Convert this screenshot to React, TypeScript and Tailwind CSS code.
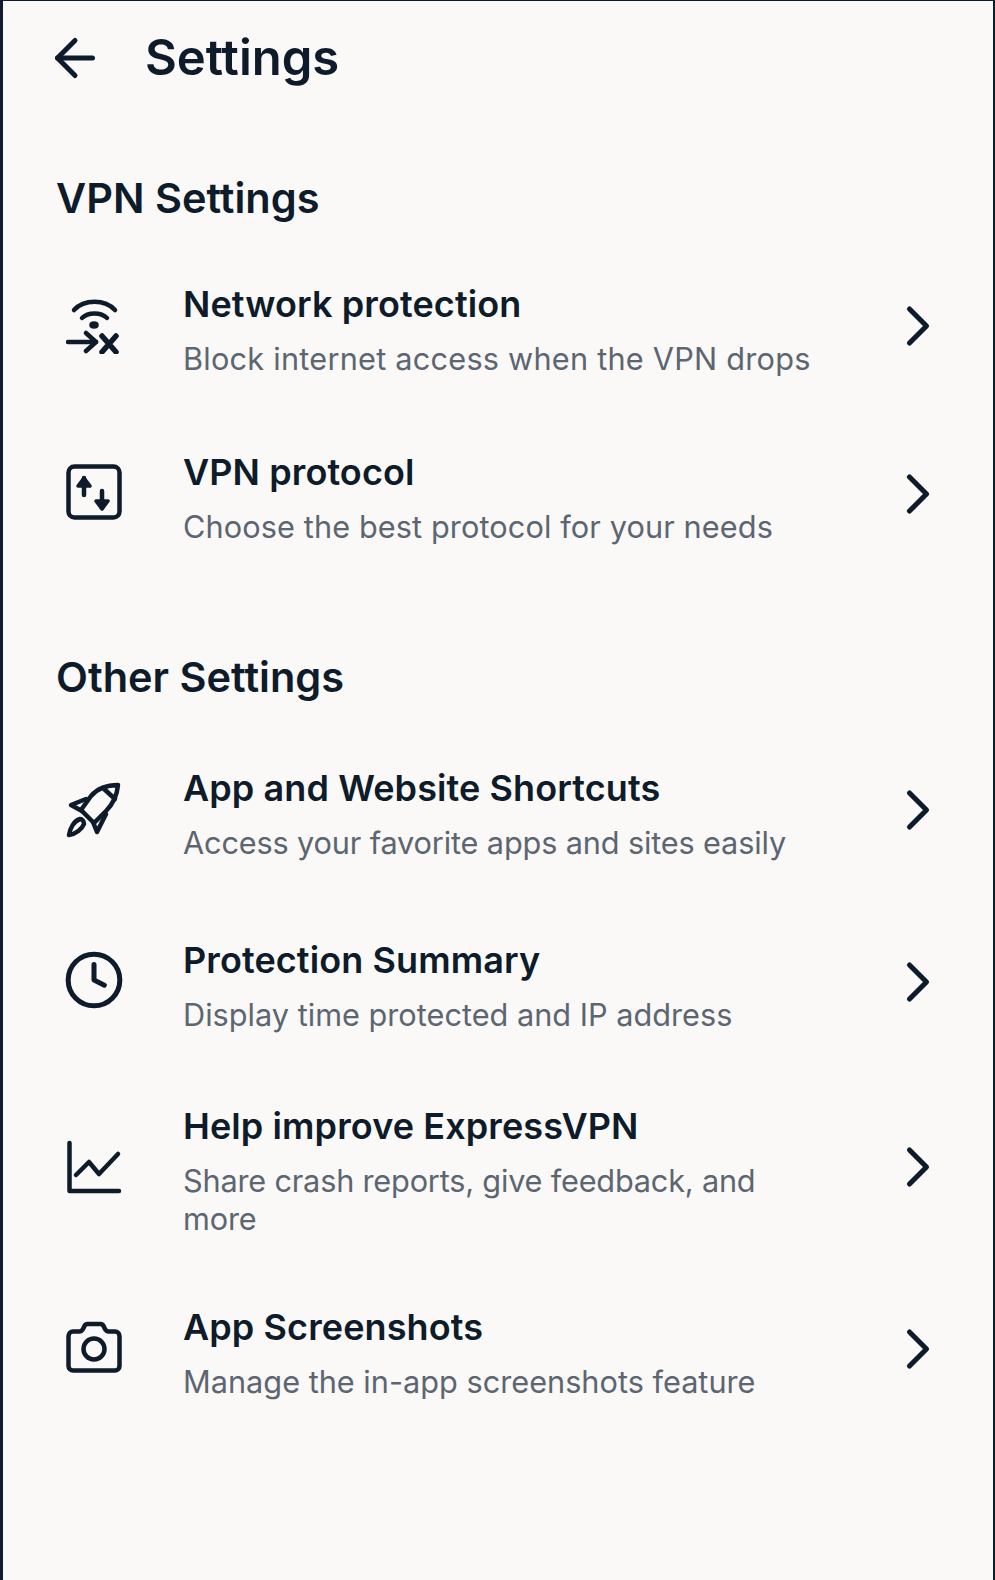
import { ArrowLeft, ChevronRight, Clock } from 'lucide-react';
import type { ReactNode } from 'react';

interface SettingRow {
  title: string;
  subtitle: string;
  icon: ReactNode;
  className: string;
  iconClassName: string;
  subtitleClassName: string;
}

function NetworkIcon() {
  return (
    <svg viewBox="0 0 56 56" className="w-14 h-14" fill="none" stroke="currentColor" strokeWidth="4.5" strokeLinecap="round" strokeLinejoin="round">
      <path d="M8 12C18 1 39 1 49 12" />
      <path d="M16 20C22 14 35 14 41 20" />
      <ellipse cx="28" cy="27" rx="2.500" ry="1.500" fill="currentColor" />
      <path d="M2 44H30" />
      <path d="M20 35L30 44L20 53" />
      <path d="M36 38L50 54M50 38L36 54" strokeWidth="5.5" />
    </svg>
  );
}

function ProtocolIcon() {
  return (
    <svg viewBox="0 0 56 56" className="w-14 h-14" fill="none" stroke="currentColor" strokeWidth="4.5" strokeLinecap="round" strokeLinejoin="round">
      <rect x="2.500" y="2.500" width="51" height="51" rx="6" />
      <path d="M18 31V14" />
      <path d="M12 22L18 14L24 22Z" fill="currentColor" strokeWidth="3.500" />
      <path d="M36 27V44" />
      <path d="M30 37L36 45L42 37Z" fill="currentColor" strokeWidth="3.500" />
    </svg>
  );
}

function RocketIcon() {
  return (
    <svg viewBox="0 0 56 56" className="w-14 h-14" fill="none" stroke="currentColor" strokeWidth="4.5" strokeLinecap="round" strokeLinejoin="round">
      <path d="M52 3C51 14 47 22 40 29L28 41L15 28L25 14C31 7 41 3 52 3Z" />
      <path d="M37 6L49 17" />
      <path d="M20 17L5 23L16 29" />
      <path d="M40 32L31 50L27 40" />
      <path d="M14 37C8 39 4 46 3 53C10 52 16 47 18 42C18 39 16 37 14 37Z" />
    </svg>
  );
}

function ChartIcon() {
  return (
    <svg viewBox="0 0 56 56" className="w-14 h-14" fill="none" stroke="currentColor" strokeWidth="4.5" strokeLinecap="round" strokeLinejoin="round">
      <path d="M3.500 4V52H53" />
      <path d="M10 36L23 23L33 35L52 15" />
    </svg>
  );
}

function CameraIcon() {
  return (
    <svg viewBox="0 0 56 56" className="w-14 h-14" fill="none" stroke="currentColor" strokeWidth="4.5" strokeLinecap="round" strokeLinejoin="round">
      <path d="M7 12.500H13.500C15 12.500 16 11.500 17 10L18.500 7C19 5.500 20 5 21.500 5H34.500C36 5 37 5.500 37.500 7L39 10C40 11.500 41 12.500 42.500 12.500H49A4.500 4.500 0 0 1 53.500 17V47A4.500 4.500 0 0 1 49 51.500H7A4.500 4.500 0 0 1 2.500 47V17A4.500 4.500 0 0 1 7 12.500Z" />
      <circle cx="28" cy="30" r="10.500" />
    </svg>
  );
}

const rows: { heading: string; className: string; items: SettingRow[] }[] = [
  {
    heading: 'VPN Settings',
    className: 'mt-[86px]',
    items: [
      {
        title: 'Network protection',
        subtitle: 'Block internet access when the VPN drops',
        icon: <NetworkIcon />,
        className: 'mt-[59px]',
        iconClassName: 'pb-[8px]',
        subtitleClassName: 'tracking-[0.23px]',
      },
      {
        title: 'VPN protocol',
        subtitle: 'Choose the best protocol for your needs',
        icon: <ProtocolIcon />,
        className: 'mt-[72px]',
        iconClassName: 'pb-[12px]',
        subtitleClassName: 'tracking-[0.1px]',
      },
    ],
  },
  {
    heading: 'Other Settings',
    className: 'mt-[106px]',
    items: [
      {
        title: 'App and Website Shortcuts',
        subtitle: 'Access your favorite apps and sites easily',
        icon: <RocketIcon />,
        className: 'mt-[64px]',
        iconClassName: 'pb-[8px]',
        subtitleClassName: '-tracking-[0.15px]',
      },
      {
        title: 'Protection Summary',
        subtitle: 'Display time protected and IP address',
        icon: <Clock className="w-[62px] h-[62px] shrink-0" strokeWidth={1.95} />,
        className: 'mt-[76px]',
        iconClassName: 'pb-[12px]',
        subtitleClassName: 'tracking-normal',
      },
      {
        title: 'Help improve ExpressVPN',
        subtitle: 'Share crash reports, give feedback, and more',
        icon: <ChartIcon />,
        className: 'mt-[70px]',
        iconClassName: 'pb-[9px]',
        subtitleClassName: '-tracking-[0.2px]',
      },
      {
        title: 'App Screenshots',
        subtitle: 'Manage the in-app screenshots feature',
        icon: <CameraIcon />,
        className: 'mt-[67px]',
        iconClassName: 'pb-[12px]',
        subtitleClassName: 'tracking-normal',
      },
    ],
  },
];

export default function App() {
  return (
    <div className="w-[995px] h-[1580px] overflow-hidden bg-[#fbf9f7] border-t border-l-[3px] border-r-2 border-[#0f1c2e] pl-[53px] pr-[41px] pt-[28px] text-[#0d1b2a] font-['Inter',sans-serif]">
      <header className="flex items-center h-[58px]">
        <ArrowLeft className="w-[60px] h-[60px] shrink-0 -ml-[11px]" strokeWidth={2} />
        <h1 className="ml-[40px] text-[49px] leading-[58px] font-semibold">Settings</h1>
      </header>

      {rows.map((section) => (
        <section key={section.heading} className={section.className}>
          <h2 className="text-[41.500px] leading-[50px] font-semibold">{section.heading}</h2>
          {section.items.map((item) => (
            <div key={item.title} className={`flex items-center ${item.className}`}>
              <div className={`w-[75px] shrink-0 flex justify-center ${item.iconClassName}`}>{item.icon}</div>
              <div className="flex-1 ml-[52px] pr-[60px]">
                <div className="text-[36px] leading-[44px] font-semibold tracking-[0.1px]">{item.title}</div>
                <div className={`mt-[14px] text-[30.700px] leading-[38px] text-[#5b6672] ${item.subtitleClassName}`}>{item.subtitle}</div>
              </div>
              <div className="shrink-0 pb-[8px]">
                <ChevronRight className="w-[68px] h-[68px]" strokeWidth={1.8} />
              </div>
            </div>
          ))}
        </section>
      ))}
    </div>
  );
}
